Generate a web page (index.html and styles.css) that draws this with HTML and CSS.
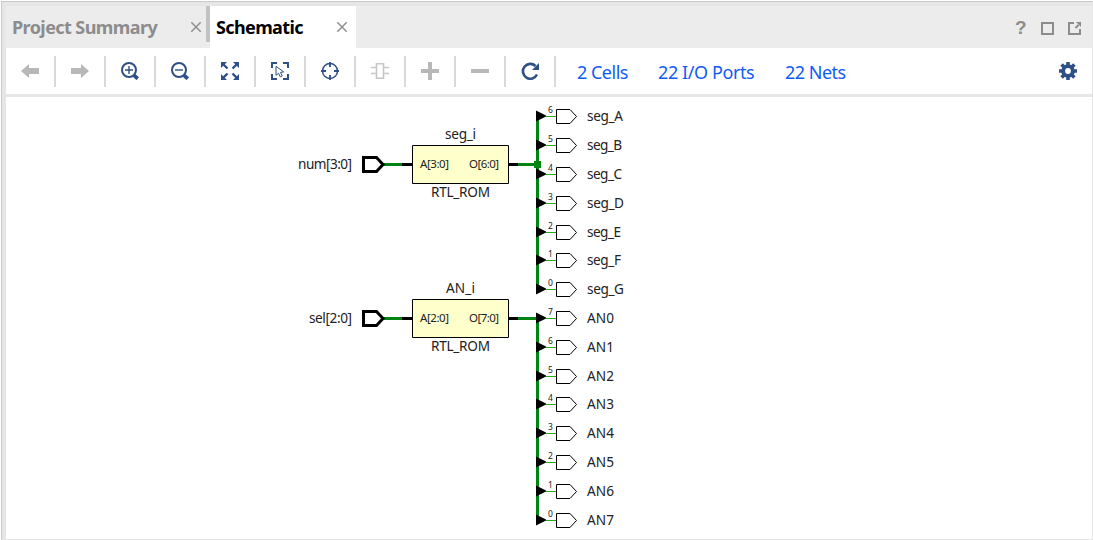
FILE: index.html
```
<!DOCTYPE html>
<html lang="en">
<head>
<meta charset="utf-8">
<title>Schematic</title>
<link rel="stylesheet" href="styles.css">
</head>
<body>
<div class="window">
  <header class="tabs">
    <div class="tab tab-summary"><span class="tab-name">Project Summary</span><svg class="close" viewBox="0 0 10 10"><path d="M.3.3l9.4 9.4M9.7.3L.3 9.7"/></svg></div>
    <div class="tab tab-active"><span class="tab-name">Schematic</span><svg class="close" viewBox="0 0 10 10"><path d="M.3.3l9.4 9.4M9.7.3L.3 9.7"/></svg></div>
    <div class="panel-actions">
      <span class="help">?</span>
      <svg width="13" height="13" viewBox="0 0 13 13"><path d="M1 1h11v11H1z"/></svg>
      <svg width="13" height="13" viewBox="0 0 13 13"><path d="M6 1H1v11h11V7M7.5 6l3-3"/><path class="solid" d="M8 0h5v5z"/></svg>
    </div>
  </header>
  <nav class="toolbar">
    <div class="tool off"><svg viewBox="0 0 18 18"><path class="solid" d="M0 9l8-7v4h10v6H8v4z"/></svg></div>
    <div class="tool off"><svg viewBox="0 0 18 18"><path class="solid" d="M18 9l-8-7v4H0v6h10v4z"/></svg></div>
    <div class="tool"><svg viewBox="0 0 18 18"><circle cx="8" cy="8" r="7" stroke-width="2"/><path d="M4 8h8M8 4v8" stroke-width="1.4"/><path d="M13 13.3l3.8 3.4" stroke-width="3.8"/></svg></div>
    <div class="tool"><svg viewBox="0 0 18 18"><circle cx="8" cy="8" r="7" stroke-width="2"/><path d="M4 8h8" stroke-width="1.4"/><path d="M13 13.3l3.8 3.4" stroke-width="3.8"/></svg></div>
    <div class="tool"><svg viewBox="0 0 18 18"><path d="M2 2l4.5 4.5M16 2l-4.5 4.5M2 16l4.5-4.5M16 16l-4.5-4.5" stroke-width="2.4"/><path class="solid" d="M0 0h6L0 6zM18 0v6l-6-6zM0 18v-6l6 6zM18 18h-6l6-6z"/></svg></div>
    <div class="tool"><svg viewBox="0 0 18 18"><path d="M1 6V1h5M12 1h5v5M17 12v5h-5M6 17H1v-5" stroke-width="2"/><path d="M5 4.3v9l2.5-2 1.8 3.6 2-1-1.8-3.5 3.2-.5z" stroke-width="1"/></svg></div>
    <div class="tool"><svg viewBox="0 0 18 18"><circle cx="9" cy="9" r="7.5" stroke-width="1.5"/><path d="M9 0v5M9 13v5M0 9h5M13 9h5" stroke-width="1.8"/></svg></div>
    <div class="tool faint"><svg viewBox="0 0 18 18"><path d="M5.5 1.8h7v14.4h-7z" stroke-width="1.6"/><path d="M0 5.5h5M0 11.5h5M13 5.5h5M13 11.5h5" stroke-width="1.6"/></svg></div>
    <div class="tool off"><svg viewBox="0 0 18 18"><path d="M0 9h18M9 0v18" stroke-width="4"/></svg></div>
    <div class="tool off"><svg viewBox="0 0 18 18"><path d="M0 9h18" stroke-width="4"/></svg></div>
    <div class="tool"><svg viewBox="0 0 18 18"><path d="M14.5 4A7.4 7.4 0 1 0 16 12.5" stroke-width="2.6"/><path class="solid" d="M18 1v7h-7z"/></svg></div>
    <div class="counts"><a class="cells">2 Cells</a><a class="ports">22 I/O Ports</a><a class="nets">22 Nets</a></div>
    <svg class="settings" viewBox="0 0 18 18"><path d="M9 0v18M0 9h18M2.6 2.6l12.8 12.8M15.4 2.6L2.6 15.4" stroke-width="3.6"/><circle class="solid" cx="9" cy="9" r="6.8"/><circle class="hole" cx="9" cy="9" r="2.9"/></svg>
  </nav>
  <main class="canvas">
    <svg class="schematic" viewBox="6 97 1086 442">
      <defs>
        <g id="out">
          <path class="tip" d="M536 -5.5v11l10-5v-1z"/>
          <path class="net" d="M546 .5h10"/>
          <path class="port" d="M556.5 -6.5h13.5l6.5 7l-6.5 7h-13.5z"/>
        </g>
        <g id="rom">
          <path class="bus" d="M383 0h20M517 0h22"/>
          <path class="pin" d="M402 0h10M509 0h9"/>
          <path class="in-port" d="M363.5 -7h13l6.5 7l-6.5 7h-13z"/>
          <path class="block" d="M412.5 -19h96v38h-96z"/>
        </g>
      </defs>
      <path class="bus" d="M537.5 112v181M537.5 317v207"/>
      <use href="#rom" y="164.5"/>
      <use href="#rom" y="318.5"/>

      <g class="name">
        <text x="298" y="169" textLength="54">num[3:0]</text>
        <text x="445" y="139" textLength="31">seg_i</text>
        <text x="431" y="197" textLength="59">RTL_ROM</text>
        <text x="309" y="323" textLength="43">sel[2:0]</text>
        <text x="446" y="293" textLength="29">AN_i</text>
        <text x="431" y="351" textLength="59">RTL_ROM</text>
      </g>
      <g class="pin-name">
        <text x="420" y="168" textLength="29">A[3:0]</text>
        <text x="469" y="168" textLength="30">O[6:0]</text>
        <text x="420" y="322" textLength="29">A[2:0]</text>
        <text x="469" y="322" textLength="30">O[7:0]</text>
      </g>

      <use href="#out" y="116"/><use href="#out" y="145"/><use href="#out" y="174"/><use href="#out" y="203"/>
      <use href="#out" y="232"/><use href="#out" y="260"/><use href="#out" y="289"/><use href="#out" y="318"/>
      <use href="#out" y="347"/><use href="#out" y="376"/><use href="#out" y="404"/><use href="#out" y="433"/>
      <use href="#out" y="462"/><use href="#out" y="491"/><use href="#out" y="520"/>
      <path class="joint" d="M534 161h7v7h-7z"/>

      <g class="bit">
        <text x="548" y="113">6</text><text x="548" y="142">5</text><text x="548" y="171">4</text>
        <text x="548" y="200">3</text><text x="548" y="229">2</text><text x="548" y="257">1</text>
        <text x="548" y="286">0</text><text x="548" y="315">7</text><text x="548" y="344">6</text>
        <text x="548" y="373">5</text><text x="548" y="401">4</text><text x="548" y="430">3</text>
        <text x="548" y="459">2</text><text x="548" y="488">1</text><text x="548" y="517">0</text>
      </g>
      <g class="name">
        <text x="587" y="121" textLength="36">seg_A</text>
        <text x="587" y="150" textLength="35">seg_B</text>
        <text x="587" y="179" textLength="35">seg_C</text>
        <text x="587" y="208" textLength="37">seg_D</text>
        <text x="587" y="237" textLength="34">seg_E</text>
        <text x="587" y="265" textLength="34">seg_F</text>
        <text x="587" y="294" textLength="37">seg_G</text>
        <text x="587" y="323" textLength="27">AN0</text>
        <text x="587" y="352" textLength="27">AN1</text>
        <text x="587" y="381" textLength="27">AN2</text>
        <text x="587" y="409" textLength="27">AN3</text>
        <text x="587" y="438" textLength="27">AN4</text>
        <text x="587" y="467" textLength="27">AN5</text>
        <text x="587" y="496" textLength="27">AN6</text>
        <text x="587" y="525" textLength="27">AN7</text>
      </g>
    </svg>
  </main>
</div>
</body>
</html>
```
FILE: styles.css
```
* { box-sizing: border-box; }
body { margin: 0; padding: 1px 0 0 1px; background: #fff; font-family: "Noto Sans", "Open Sans", sans-serif; }
svg { display: block; fill: none; stroke: currentColor; flex: none; }
.window {
  width: 1092px; height: 539px; padding: 4px 0 0 4px;
  border: 1px solid #e6e6e6; border-top-color: #c8cbca; border-left-color: #c8cbca;
  background: #e6e6e6; display: flex; flex-direction: column;
}
.tabs { height: 42px; flex: none; background: #ececec; display: flex; }
.tab { display: flex; align-items: center; font-size: 18px; font-weight: 700; white-space: nowrap; padding-left: 6px; }
.tab-name { flex: 1; line-height: 42px; }
.tab-summary { width: 204px; color: #8c8c8c; padding-right: 5px; position: relative; letter-spacing: -.58px; }
.tab-summary::after { content: ""; position: absolute; right: 0; top: 0; width: 4px; height: 36px; background: #c2c2c2; }
.tab-active { width: 146px; color: #000; background: #fff; padding-right: 9px; letter-spacing: -.62px; }
.close { width: 10px; height: 10px; color: #8f8f8f; stroke-width: 1.5; }
.tab-summary .close { margin-right: 4px; }
.panel-actions { margin-left: auto; padding: 2px 11px 0 0; display: flex; align-items: center; gap: 14px; color: #8c8c8c; stroke-width: 2; }
.help { font-family: "Liberation Sans", sans-serif; font-size: 19px; font-weight: 700; line-height: 20px; width: 12px; }
.solid { fill: currentColor; stroke: none; }
.toolbar { height: 46px; flex: none; background: #fff; display: flex; align-items: center; }
.tool { width: 50px; height: 31px; border-right: 2px solid #d9d9d9; display: flex; align-items: center; justify-content: center; color: #2f4f87; }
.tool svg { width: 18px; height: 18px; }
.tool.off { color: #b8b8b8; }
.tool.faint { color: #c6c6c6; }
.counts { display: flex; color: #0f5cf5; font-size: 18px; line-height: 24px; padding: 1px 0 0 21px; white-space: nowrap; letter-spacing: -.5px; }
.cells { width: 81px; }
.ports { width: 127px; letter-spacing: -.4px; }
.settings { width: 18px; height: 18px; margin-left: auto; margin-right: 15px; color: #2f4f87; }
.hole { fill: #fff; stroke: none; }
.canvas { flex: 1; margin-top: 3px; background: #fff; min-height: 0; }
.schematic { width: 1086px; height: 442px; }
.schematic text { stroke: none; fill: #222; }
.name { font-size: 13.6px; }
.pin-name { font-size: 11.5px; }
.bit { font-size: 8.5px; }
.bus { stroke: #008514; stroke-width: 3; }
.joint { fill: #008514; stroke: none; }
.pin { stroke: #000; stroke-width: 3; }
.in-port { stroke: #000; stroke-width: 3; }
.block { fill: #ffffcc; stroke: #000; stroke-width: 1; }
.tip { fill: #000; stroke: none; }
.net { stroke: #20ad10; stroke-width: 1; }
.port { fill: #fff; stroke: #000; stroke-width: 1; }
```
